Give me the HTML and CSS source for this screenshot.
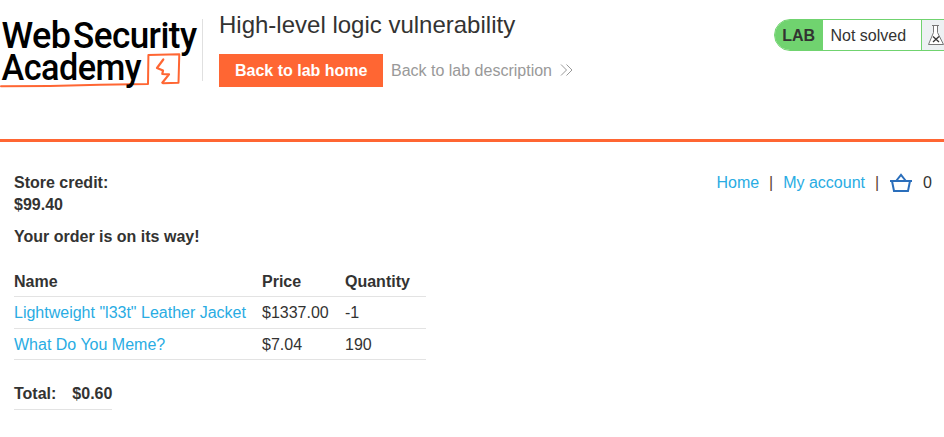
FILE: index.html
```html
<!DOCTYPE html>
<html lang="en">
<head>
<meta charset="utf-8">
<title>High-level logic vulnerability</title>
<link rel="stylesheet" href="styles.css">
</head>
<body>
<header class="lab-header">
  <svg class="logo" width="202" height="100" viewBox="0 0 202 100" role="img" aria-label="Web Security Academy">
    <g fill="none" stroke="#ff6633" stroke-linejoin="round" stroke-linecap="round">
      <path stroke-width="2" d="M1 86.200L50 86L100 84.800L148 84L148.400 55L179.300 54.200L178.500 82.800L163 83.200"/>
      <path stroke-width="2.200" d="M163.300 59.500L157 68L163 70.500L162.300 74L169 74.400L162.300 82.700"/>
    </g>
    <g class="logo-text">
      <text x="1.500" y="47.500" textLength="69" lengthAdjust="spacingAndGlyphs">Web</text>
      <text x="73" y="47.500" textLength="123.500" lengthAdjust="spacingAndGlyphs">Security</text>
      <text x="1.500" y="80" textLength="139.500" lengthAdjust="spacingAndGlyphs">Academy</text>
    </g>
  </svg>
  <div class="title-block">
    <h1>High-level logic vulnerability</h1>
    <div class="actions">
      <a class="button">Back to lab home</a>
      <a class="description">Back to lab description
        <svg width="14" height="14" viewBox="0 0 14 14" fill="none" stroke="#999" stroke-width="1"><path d="M1 .5l5.500 5.500L1 11.500M6.500 .5L12 6l-5.500 5.500"/></svg>
      </a>
    </div>
  </div>
  <div class="status">
    <span class="lab">LAB</span>
    <span class="state">Not solved</span>
    <span class="flask">
      <svg width="18" height="22" viewBox="0 0 18 22" fill="#fff" stroke="#777" stroke-width="1"><path d="M5 1.500h7M6.500 1.500v7L1.500 20.500h15L10.500 8.500v-7"/><path stroke="#333" stroke-width="1.300" d="M6 12.500l6 5.500M12 12.500L6 18"/></svg>
    </span>
  </div>
</header>
<main>
  <div class="top">
    <div class="credit">Store credit:<br>$99.40</div>
    <nav>
      <a>Home</a><span class="bar">|</span><a>My account</a><span class="bar">|</span>
      <svg width="24" height="22" viewBox="0 0 24 22" fill="none" stroke="#2a6ebb" stroke-width="2"><path d="M1 9h22M3 9l2 10h14l2-10M7.500 8.500L12 2.800l4.500 5.700"/></svg>
      <span class="count">0</span>
    </nav>
  </div>
  <p class="message">Your order is on its way!</p>
  <table class="items">
    <thead><tr><th class="name">Name</th><th class="price">Price</th><th>Quantity</th></tr></thead>
    <tbody>
      <tr class="tall"><td><a>Lightweight "l33t" Leather Jacket</a></td><td>$1337.00</td><td>-1</td></tr>
      <tr><td><a>What Do You Meme?</a></td><td>$7.04</td><td>190</td></tr>
    </tbody>
  </table>
  <div class="total"><span>Total:</span><span>$0.60</span></div>
</main>
</body>
</html>
```
FILE: styles.css
```css
* { box-sizing: border-box; }
body {
  margin: 0;
  background: #fff;
  color: #333332;
  font: 16px/22px "Liberation Sans", Arial, sans-serif;
  overflow: hidden;
}
.lab-header {
  display: flex;
  align-items: flex-start;
  height: 142px;
  border-bottom: 3px solid #ff6633;
}
.logo { flex: none; display: block; overflow: visible; }
.logo-text {
  font: 500 37.5px Roboto, sans-serif;
  letter-spacing: -.6px;
  fill: #000;
}
.title-block {
  height: 62px;
  margin-top: 19px;
  padding-left: 16px;
  border-left: 1px solid #e0e0e0;
}
h1 {
  margin: -8px 0 15px;
  font-size: 24px;
  font-weight: 400;
  line-height: 28px;
}
.actions { display: flex; align-items: center; gap: 8px; }
.button {
  width: 164px;
  height: 33px;
  padding-left: 16px;
  background: #ff6633;
  font-weight: 700;
  line-height: 33px;
  white-space: nowrap;
}
.description { display: flex; align-items: center; gap: 8px; }
.status {
  display: flex;
  flex: none;
  width: 180px;
  height: 32px;
  margin: 19px -10px 0 auto;
  border: 1px solid #70d36f;
  border-radius: 16px 0 0 16px;
  line-height: 31px;
  overflow: hidden;
}
.lab {
  width: 48px;
  padding-left: 7.2px;
  background: #70d36f;
  font-weight: 700;
}
.state { width: 98px; padding-left: 7.5px; }
.flask {
  flex: 1;
  padding: 4px 0 0 5px;
  background: #edf1f3;
  border-left: 1px solid #70d36f;
}
.flask svg { display: block; }
main { padding: 30px 12px 0 14px; }
a { color: #29ace3; }
.button { color: #fff; }
.description { color: #999; }
.top { display: flex; justify-content: space-between; align-items: flex-start; }
.credit { font-weight: 700; }
nav { display: flex; }
.bar { width: 24px; text-align: center; color: #5c4632; }
.count { width: 9px; margin-left: 10px; }
.message { margin: 10px 0 18px; font-weight: 700; }
.items { width: 412px; border-collapse: separate; border-spacing: 0; table-layout: fixed; }
.name { width: 248px; }
.price { width: 83px; }
th, td {
  height: 31px;
  padding: 1px 0 0;
  border-bottom: 1px solid #e3e3e3;
  text-align: left;
}
.tall td { height: 32px; }
.total {
  display: inline-flex;
  gap: 16px;
  height: 32px;
  margin-top: 18px;
  padding-top: 5px;
  border-bottom: 1px solid #e3e3e3;
  font-weight: 700;
}
```
